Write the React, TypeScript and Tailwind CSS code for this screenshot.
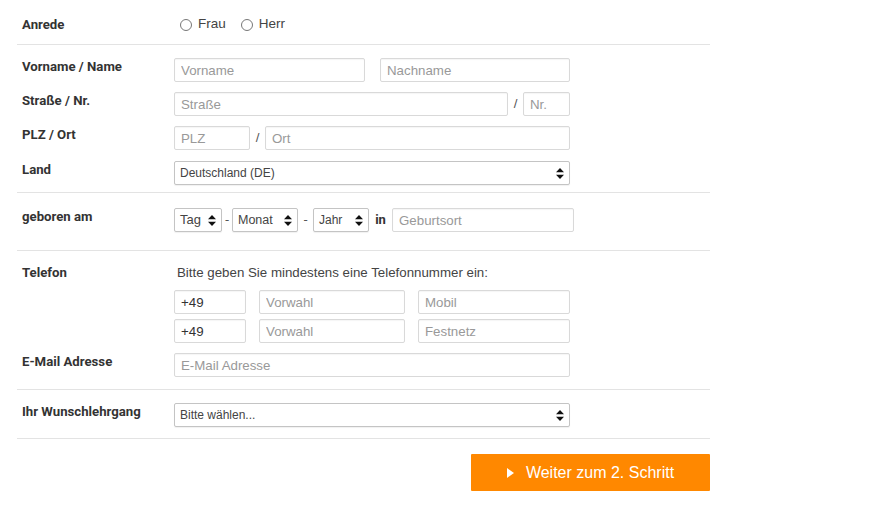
import React from 'react';

const label = "font-['Roboto',sans-serif] font-bold text-[13.2px] leading-[18px] text-[#333]";
const field =
  "h-[24px] border border-[#d9d9d9] rounded-[2px] bg-white px-[6px] text-[13.3px] text-[#333] font-['Liberation_Sans',Arial,sans-serif] placeholder:text-[#999] outline-none shadow-[inset_0_1px_1px_rgba(0,0,0,0.04)]";

function Arrows() {
  return (
    <svg width="8" height="11" viewBox="0 0 8 11" className="shrink-0">
      <path d="M4 0 L8 4.3 L0 4.3 Z M0 6.7 L8 6.7 L4 11 Z" fill="#111" />
    </svg>
  );
}

function Select({ text, className, size }: { text: string; className: string; size: string }) {
  return (
    <div
      className={`h-[24px] flex items-center justify-between border border-[#c4c4c4] rounded-[2px] bg-white pl-[5px] pr-[5px] shadow-[0_1px_1px_rgba(0,0,0,0.06)] font-['Liberation_Sans',Arial,sans-serif] text-[#444] ${size} ${className}`}
    >
      <span>{text}</span>
      <Arrows />
    </div>
  );
}

function Radio({ text }: { text: string }) {
  return (
    <label className="flex items-center gap-[6px] text-[13.5px] text-[#444] font-['Liberation_Sans',Arial,sans-serif]">
      <span className="w-[12px] h-[12px] rounded-full border border-[#777] bg-white" />
      {text}
    </label>
  );
}

function Row({ title, children }: { title?: string; children: React.ReactNode }) {
  return (
    <div className="flex">
      <div className={`w-[157px] shrink-0 pl-[5px] ${label}`}>{title}</div>
      <div className="flex items-center">{children}</div>
    </div>
  );
}

export default function App() {
  return (
    <div className="w-[888px] h-[526px] bg-white pl-[17px] pt-0">
      <div className="w-[693px]">
        {/* Anrede */}
        <div className="h-[45px] flex items-center border-b border-[#e3e3e3] pt-[5px]">
          <div className={`w-[157px] pl-[5px] ${label}`}>Anrede</div>
          <div className="flex items-center gap-[15px] pl-[6px]">
            <Radio text="Frau" />
            <Radio text="Herr" />
          </div>
        </div>

        {/* Name / Adresse */}
        <div className="flex flex-col gap-[10px] pt-[13px] pb-[7px] border-b border-[#e3e3e3]">
          <Row title="Vorname / Name">
            <input className={`${field} w-[191px]`} placeholder="Vorname" />
            <input className={`${field} w-[190px] ml-[15px]`} placeholder="Nachname" />
          </Row>
          <Row title="Straße / Nr.">
            <input className={`${field} w-[334px]`} placeholder="Straße" />
            <span className="w-[15px] text-center text-[13.3px] text-[#555] font-['Liberation_Sans',Arial,sans-serif]">/</span>
            <input className={`${field} w-[47px]`} placeholder="Nr." />
          </Row>
          <Row title="PLZ / Ort">
            <input className={`${field} w-[76px]`} placeholder="PLZ" />
            <span className="w-[15px] text-center text-[13.3px] text-[#555] font-['Liberation_Sans',Arial,sans-serif]">/</span>
            <input className={`${field} w-[305px]`} placeholder="Ort" />
          </Row>
          <div className="mt-[1px]">
            <Row title="Land">
              <Select text="Deutschland (DE)" className="w-[396px]" size="text-[12px]" />
            </Row>
          </div>
        </div>

        {/* Geburt */}
        <div className="pt-[15px] pb-[18px] border-b border-[#e3e3e3]">
          <Row title="geboren am">
            <Select text="Tag" className="w-[48px]" size="text-[13px]" />
            <span className="w-[10px] text-center text-[13px] text-[#555]">-</span>
            <Select text="Monat" className="w-[66px]" size="text-[12.5px]" />
            <span className="w-[15px] text-center text-[13px] text-[#555]">-</span>
            <Select text="Jahr" className="w-[56px]" size="text-[12px]" />
            <span className="w-[23px] text-center font-['Roboto',sans-serif] font-bold text-[13px] text-[#333]">in</span>
            <input className={`${field} w-[182px]`} placeholder="Geburtsort" />
          </Row>
        </div>

        {/* Kontakt */}
        <div className="flex flex-col pt-[13px] pb-[12px] border-b border-[#e3e3e3]">
          <Row title="Telefon">
            <span className="pl-[3px] leading-[18px] text-[13.3px] text-[#444] font-['Liberation_Sans',Arial,sans-serif]">
              Bitte geben Sie mindestens eine Telefonnummer ein:
            </span>
          </Row>
          <div className="flex flex-col gap-[5px] mt-[8px]">
            <Row>
              <input className={`${field} w-[72px]`} defaultValue="+49" />
              <input className={`${field} w-[146px] ml-[13px]`} placeholder="Vorwahl" />
              <input className={`${field} w-[152px] ml-[13px]`} placeholder="Mobil" />
            </Row>
            <Row>
              <input className={`${field} w-[72px]`} defaultValue="+49" />
              <input className={`${field} w-[146px] ml-[13px]`} placeholder="Vorwahl" />
              <input className={`${field} w-[152px] ml-[13px]`} placeholder="Festnetz" />
            </Row>
          </div>
          <div className="mt-[10px]">
            <Row title="E-Mail Adresse">
              <input className={`${field} w-[396px]`} placeholder="E-Mail Adresse" />
            </Row>
          </div>
        </div>

        {/* Lehrgang */}
        <div className="pt-[13px] pb-[11px] border-b border-[#e3e3e3]">
          <Row title="Ihr Wunschlehrgang">
            <Select text="Bitte wählen..." className="w-[396px]" size="text-[12px]" />
          </Row>
        </div>

        <div className="flex justify-end pt-[15px]">
          <button className="w-[239px] h-[37px] bg-[#ff8800] rounded-[1px] flex items-center justify-center gap-[12px] text-white text-[16px] font-['Liberation_Sans',Arial,sans-serif]">
            <svg width="7" height="10" viewBox="0 0 7 10">
              <path d="M0 0 L7 5 L0 10 Z" fill="#fff" />
            </svg>
            Weiter zum 2. Schritt
          </button>
        </div>
      </div>
    </div>
  );
}
